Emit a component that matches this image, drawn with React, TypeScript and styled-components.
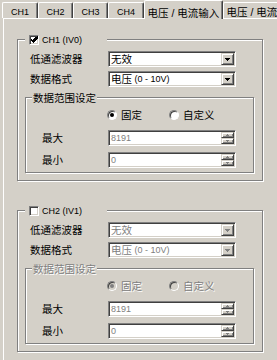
import React from "react";
import styled, { createGlobalStyle, css } from "styled-components";

const FACE = "#d4d0c8";
const SHADOW = "#808080";
const DARK = "#404040";
const LIGHT = "#ffffff";
const GRAY_TEXT = "#808080";

const GlobalStyle = createGlobalStyle`
  html, body {
    margin: 0;
    padding: 0;
    overflow: hidden;
    background: ${FACE};
  }
  body {
    font-family: "Liberation Sans", "Noto Sans CJK SC", sans-serif;
    font-size: 10.5px;
    line-height: 12px;
    color: #000;
  }
`;

const sunken = css`
  box-sizing: border-box;
  background: ${LIGHT};
  border: 1px solid;
  border-color: ${SHADOW} ${LIGHT} ${LIGHT} ${SHADOW};
  box-shadow: inset 1px 1px 0 ${DARK}, inset -1px -1px 0 ${FACE};
`;

const raised = css`
  box-sizing: border-box;
  background: ${FACE};
  border: 1px solid;
  border-color: ${FACE} ${DARK} ${DARK} ${FACE};
  box-shadow: inset 1px 1px 0 ${LIGHT}, inset -1px -1px 0 ${SHADOW};
`;

const etched = css`
  position: relative;
  box-sizing: border-box;
  border: 1px solid ${SHADOW};
  box-shadow: inset 1px 1px 0 ${LIGHT}, 1px 1px 0 ${LIGHT};
`;

const Window = styled.div`
  width: 277px;
  height: 360px;
  overflow: hidden;
  background: ${FACE};
`;

const Lat = styled.span`
  font-size: 9px;
`;

const Txt = styled.span<{ $off?: boolean }>`
  color: ${(p) => (p.$off ? GRAY_TEXT : "#000")};
  text-shadow: ${(p) => (p.$off ? `1px 1px 0 ${LIGHT}` : "none")};
  white-space: nowrap;
`;

/* tabs */

const TabStrip = styled.div`
  display: flex;
  align-items: flex-end;
  height: 18px;
  padding-left: 2px;
`;

const Tab = styled.div<{ $w: number; $active?: boolean }>`
  flex: none;
  box-sizing: border-box;
  width: ${(p) => p.$w}px;
  height: ${(p) => (p.$active ? 19 : 16)}px;
  margin-bottom: ${(p) => (p.$active ? -1 : 0)}px;
  padding-top: ${(p) => (p.$active ? 5 : 3)}px;
  display: flex;
  align-items: center;
  justify-content: center;
  white-space: nowrap;
  background: ${FACE};
  border-top: 1px solid ${LIGHT};
  border-left: 1px solid ${LIGHT};
  border-right: 1px solid ${DARK};
  border-radius: 2px 2px 0 0;
  box-shadow: inset -1px 0 0 ${SHADOW};
  position: relative;
  z-index: ${(p) => (p.$active ? 2 : 1)};
`;

const Panel = styled.div`
  box-sizing: border-box;
  width: 300px;
  min-height: 360px;
  margin-left: 3px;
  padding: 20px 0 0 13px;
  border-top: 1px solid ${LIGHT};
  border-left: 1px solid ${LIGHT};
`;

/* group boxes */

const ChannelBox = styled.div`
  ${etched}
  width: 246px;
  padding: 11px 8px 7px 7px;
  & + & {
    margin-top: 29px;
  }
`;

const RangeBox = styled.div`
  ${etched}
  margin-top: 10px;
  padding: 11px 0 4px;
`;

const Legend = styled.div<{ $left: number; $width?: number; $pad: number }>`
  position: absolute;
  top: -7px;
  left: ${(p) => p.$left}px;
  box-sizing: border-box;
  width: ${(p) => (p.$width ? `${p.$width}px` : "auto")};
  height: 13px;
  display: flex;
  align-items: center;
  gap: 3px;
  padding: 0 ${(p) => (p.$width ? 0 : p.$pad)}px 0 ${(p) => p.$pad}px;
  background: ${FACE};
  white-space: nowrap;
`;

const CheckBox = styled.span`
  ${sunken}
  flex: none;
  width: 10px;
  height: 10px;
  display: grid;
  place-items: center;
`;

/* rows */

const FieldRow = styled.div<{ $indent: number; $label: number; $mt?: number }>`
  display: grid;
  grid-template-columns: ${(p) => p.$label}px 128px;
  align-items: center;
  height: 16px;
  padding-left: ${(p) => p.$indent}px;
  margin-top: ${(p) => p.$mt ?? 0}px;
  white-space: nowrap;
`;

const Field = styled.div`
  ${sunken}
  height: 16px;
  padding: 1px;
  display: flex;
  align-items: stretch;
`;

const FieldValue = styled.span<{ $off?: boolean }>`
  flex: 1;
  display: flex;
  align-items: center;
  padding-left: 1px;
  overflow: hidden;
  white-space: nowrap;
  color: ${(p) => (p.$off ? GRAY_TEXT : "#000")};
`;

const DropButton = styled.span`
  ${raised}
  flex: none;
  width: 13px;
  display: grid;
  place-items: center;
`;

const SpinButtons = styled.span`
  flex: none;
  width: 13px;
  display: flex;
  flex-direction: column;
`;

const SpinButton = styled.span`
  ${raised}
  flex: 1;
  display: grid;
  place-items: center;
`;

const RadioRow = styled.div`
  display: flex;
  align-items: center;
  height: 12px;
  padding-left: 81px;
`;

const RadioItem = styled.label<{ $w?: number }>`
  display: flex;
  align-items: center;
  gap: 4px;
  width: ${(p) => (p.$w ? `${p.$w}px` : "auto")};
`;

const RadioMark = styled.span<{ $checked?: boolean; $off?: boolean }>`
  flex: none;
  box-sizing: border-box;
  width: 10px;
  height: 10px;
  border-radius: 50%;
  border: 1px solid;
  border-color: ${SHADOW} ${LIGHT} ${LIGHT} ${SHADOW};
  box-shadow: inset 1px 1px 0 ${DARK};
  background: ${(p) => (p.$off ? FACE : LIGHT)};
  display: grid;
  place-items: center;
  &::after {
    content: "";
    width: 4px;
    height: 4px;
    border-radius: 50%;
    background: ${(p) =>
      p.$checked ? (p.$off ? GRAY_TEXT : "#000") : "transparent"};
  }
`;

/* bits */

const Tick = () => (
  <svg width="7" height="7" viewBox="0 0 7 7" shapeRendering="crispEdges">
    <path
      d="M6 0h1v3h-1v1h-1v1h-1v1h-1v1h-1v-1h-1v-1h-1v-1h-1v-2h1v1h1v1h1v-1h1v-1h1v-1h1z"
      fill="#000"
    />
  </svg>
);

const DownArrow = ({ color }: { color: string }) => (
  <svg width="5" height="3" viewBox="0 0 5 3" shapeRendering="crispEdges">
    <path d="M0 0h5v1h-1v1h-1v1h-1v-1h-1v-1h-1z" fill={color} />
  </svg>
);

const SmallArrow = ({ up }: { up?: boolean }) => (
  <svg width="3" height="2" viewBox="0 0 3 2" shapeRendering="crispEdges">
    <path
      d={up ? "M1 0h1v1h1v1h-3v-1h1z" : "M0 0h3v1h-1v1h-1v-1h-1z"}
      fill={GRAY_TEXT}
    />
  </svg>
);

const Combo = ({
  off,
  children,
}: {
  off?: boolean;
  children: React.ReactNode;
}) => (
  <Field>
    <FieldValue $off={off}>{children}</FieldValue>
    <DropButton>
      <DownArrow color={off ? GRAY_TEXT : "#000"} />
    </DropButton>
  </Field>
);

const Spin = ({ value }: { value: string }) => (
  <Field>
    <FieldValue $off>
      <Lat>{value}</Lat>
    </FieldValue>
    <SpinButtons>
      <SpinButton>
        <SmallArrow up />
      </SpinButton>
      <SpinButton>
        <SmallArrow />
      </SpinButton>
    </SpinButtons>
  </Field>
);

type Channel = { name: string; code: string; enabled: boolean };

const channels: Channel[] = [
  { name: "CH1", code: "IV0", enabled: true },
  { name: "CH2", code: "IV1", enabled: false },
];

const tabs = [
  { text: "CH1", w: 36, latin: true },
  { text: "CH2", w: 35, latin: true },
  { text: "CH3", w: 35, latin: true },
  { text: "CH4", w: 36, latin: true },
  { text: "电压 / 电流输入", w: 79, active: true },
  { text: "电压 / 电流输出", w: 79 },
];

const ChannelGroup = ({ ch }: { ch: Channel }) => {
  const off = !ch.enabled;
  return (
    <ChannelBox>
      <Legend $left={7} $width={82} $pad={4}>
        <CheckBox>{ch.enabled && <Tick />}</CheckBox>
        <Lat>
          {ch.name} ({ch.code})
        </Lat>
      </Legend>

      <FieldRow $indent={5} $label={78}>
        <span>低通滤波器</span>
        <Combo off={off}>无效</Combo>
      </FieldRow>
      <FieldRow $indent={5} $label={78} $mt={4}>
        <span>数据格式</span>
        <Combo off={off}>
          电压<Lat>&nbsp;(0 - 10V)</Lat>
        </Combo>
      </FieldRow>

      <RangeBox>
        <Legend $left={6} $pad={1}>
          <Txt $off={off}>数据范围设定</Txt>
        </Legend>
        <RadioRow>
          <RadioItem $w={62}>
            <RadioMark $checked $off={off} />
            <Txt $off={off}>固定</Txt>
          </RadioItem>
          <RadioItem>
            <RadioMark $off={off} />
            <Txt $off={off}>自定义</Txt>
          </RadioItem>
        </RadioRow>
        <FieldRow $indent={16} $label={66} $mt={9}>
          <span>最大</span>
          <Spin value="8191" />
        </FieldRow>
        <FieldRow $indent={16} $label={66} $mt={6}>
          <span>最小</span>
          <Spin value="0" />
        </FieldRow>
      </RangeBox>
    </ChannelBox>
  );
};

export default function App() {
  return (
    <>
      <GlobalStyle />
      <Window>
        <TabStrip>
          {tabs.map((t) => (
            <Tab key={t.text} $w={t.w} $active={t.active}>
              {t.latin ? <Lat>{t.text}</Lat> : t.text}
            </Tab>
          ))}
        </TabStrip>
        <Panel>
          {channels.map((ch) => (
            <ChannelGroup key={ch.name} ch={ch} />
          ))}
        </Panel>
      </Window>
    </>
  );
}
